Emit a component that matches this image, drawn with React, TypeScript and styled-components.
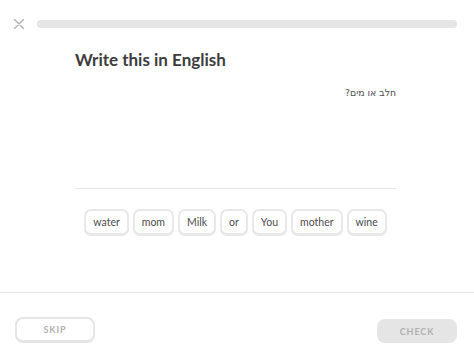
import React from "react";
import styled, { createGlobalStyle } from "styled-components";

const Global = createGlobalStyle`
  html, body { margin: 0; padding: 0; background: #fff; }
  body { font-family: Lato, "Noto Sans", sans-serif; color: #4b4b4b; }
  * { box-sizing: border-box; }
`;

const Page = styled.div`
  width: 474px;
  height: 361px;
  display: flex;
  flex-direction: column;
  overflow: hidden;
`;

const Header = styled.div`
  display: flex;
  align-items: center;
  gap: 13px;
  padding: 19px 17px 0 14px;
  height: 29px;
`;

const CloseButton = styled.button`
  width: 10px;
  height: 10px;
  padding: 0;
  border: 0;
  background: none;
  display: flex;
  cursor: pointer;
`;

const ProgressTrack = styled.div`
  flex: 1;
  height: 8px;
  border-radius: 4px;
  background: #e5e5e5;
`;

const Main = styled.div`
  flex: 1;
  display: flex;
  flex-direction: column;
  padding: 0 78px 0 75px;
`;

const Title = styled.h1`
  margin: 20px 0 0;
  font-family: Lato, "Noto Sans", sans-serif;
  font-size: 17px;
  font-weight: 700;
  line-height: 22px;
  color: #3c3c3c;
`;

const Prompt = styled.div`
  margin-top: 14px;
  text-align: right;
  font-size: 9.3px;
  line-height: 16px;
  color: #4b4b4b;
  font-family: "DejaVu Sans", "Noto Sans", sans-serif;
`;

const AnswerArea = styled.div`
  height: 88px;
  border-bottom: 1px solid #e5e5e5;
`;

const WordBank = styled.div`
  display: flex;
  justify-content: center;
  gap: 4px;
  margin-top: 20px;
`;

const Word = styled.button`
  height: 27px;
  padding: 0 7px;
  border: 2px solid #e8e8e8;
  border-bottom-width: 3px;
  border-radius: 7px;
  background: #fff;
  font-family: Lato, "Noto Sans", sans-serif;
  font-size: 10.5px;
  color: #4b4b4b;
  display: flex;
  align-items: center;
  justify-content: center;
  cursor: pointer;
`;

const Footer = styled.div`
  border-top: 1px solid #e5e5e5;
  height: 69px;
  display: flex;
  justify-content: space-between;
  align-items: flex-start;
  padding: 24px 17px 0 15px;
`;

const FooterButton = styled.button<{ $disabled?: boolean }>`
  width: 80px;
  height: ${(p) => (p.$disabled ? "24px" : "26px")};
  margin-top: ${(p) => (p.$disabled ? "2px" : "0")};
  border-radius: 8px;
  border: ${(p) => (p.$disabled ? "0" : "2px solid #e5e5e5")};
  border-bottom-width: ${(p) => (p.$disabled ? "0" : "3px")};
  background: ${(p) => (p.$disabled ? "#e5e5e5" : "#fff")};
  color: #afafaf;
  font-family: Lato, "Noto Sans", sans-serif;
  font-weight: 700;
  font-size: 9px;
  letter-spacing: 0.9px;
  text-transform: uppercase;
  display: flex;
  align-items: center;
  justify-content: center;
  padding: 0;
`;

const words = ["water", "mom", "Milk", "or", "You", "mother", "wine"];

export default function App() {
  return (
    <>
      <Global />
      <Page>
        <Header>
          <CloseButton aria-label="close">
            <svg width="10" height="10" viewBox="0 0 10 10">
              <path d="M0.5 0.5 L9.5 9.5 M9.5 0.5 L0.5 9.5" stroke="#afafaf" strokeWidth="1.3" strokeLinecap="round" />
            </svg>
          </CloseButton>
          <ProgressTrack />
        </Header>
        <Main>
          <Title>Write this in English</Title>
          <Prompt dir="rtl">חלב או מים?</Prompt>
          <AnswerArea />
          <WordBank>
            {words.map((w) => (
              <Word key={w}>{w}</Word>
            ))}
          </WordBank>
        </Main>
        <Footer>
          <FooterButton>Skip</FooterButton>
          <FooterButton $disabled>Check</FooterButton>
        </Footer>
      </Page>
    </>
  );
}
